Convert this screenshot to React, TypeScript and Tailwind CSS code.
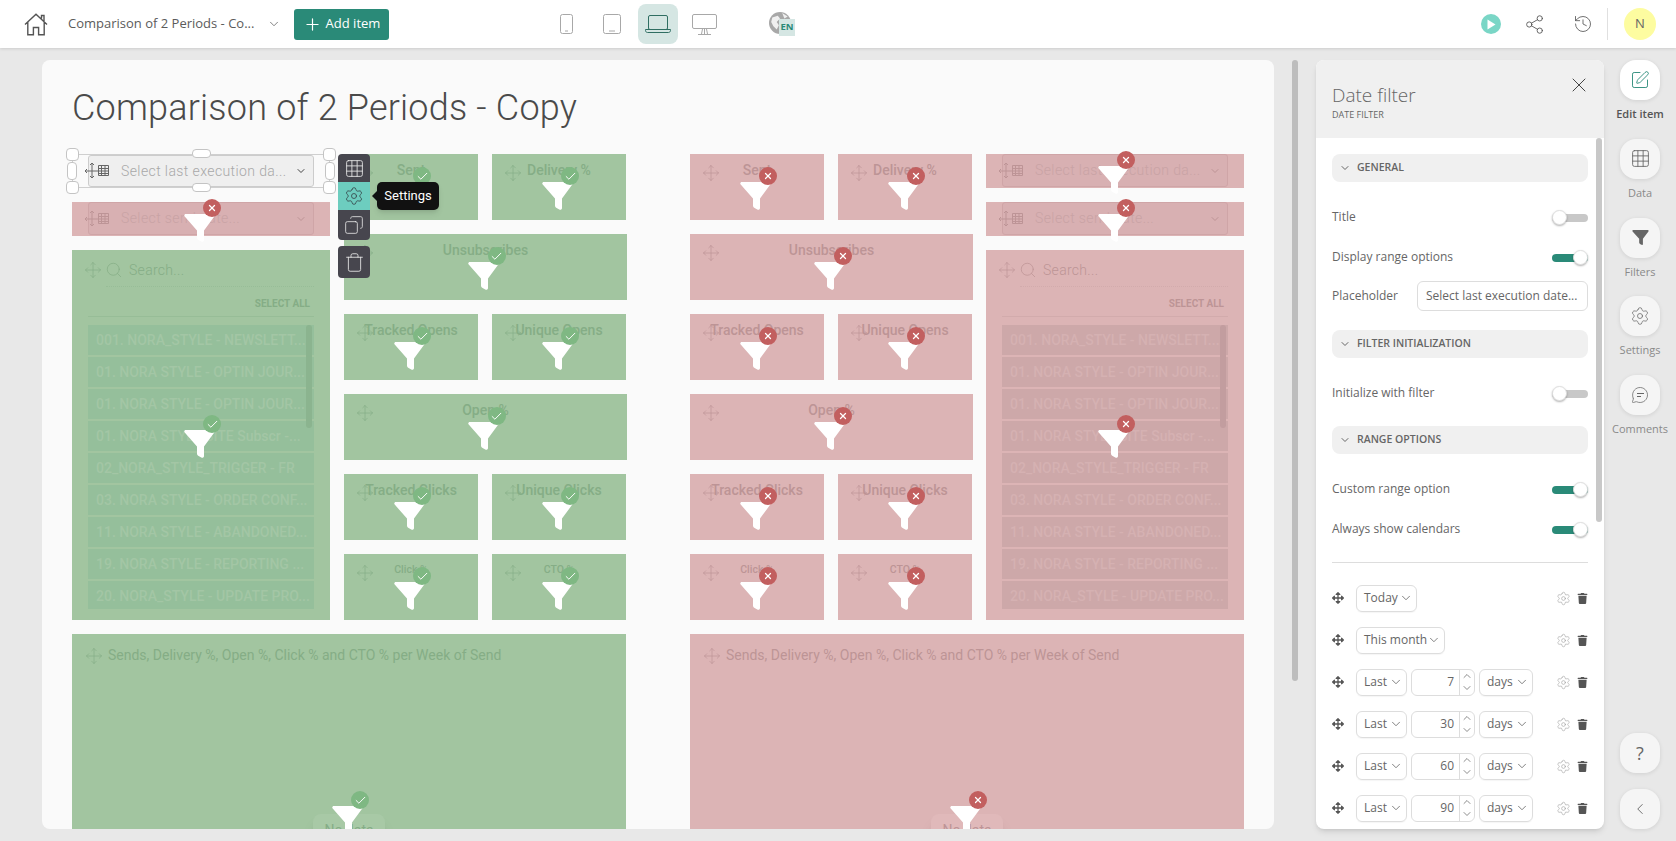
import React from 'react';
import {
    ChevronDown,
    ChevronLeft,
    ChevronUp,
    Check,
    Copy,
    Grid3x3,
    History,
    MessageCircle,
    Move,
    Plus,
    Search,
    Settings,
    Share2,
    SquarePen,
    Trash,
    X,
} from 'lucide-react';
import { FaArrowsAlt, FaTrash } from 'react-icons/fa';

type Tone = 'green' | 'red';

const tones = {
    green: {
        tile: 'bg-[#a2c5a0]',
        text: 'text-[#85ad86]',
        icon: 'text-[#85ad86]',
        badge: 'bg-[#7fb883]',
        row: 'bg-[#95bf9b]',
        rowText: 'text-[#a3c6a5]',
        thumb: 'bg-[#8bb48f]',
        line: 'border-[#97bd97]',
        selectBorder: 'border-[#97bd97]',
        selectText: 'text-[#9cbf9c]',
        select: 'bg-[#9ec19c]',
        chip: 'bg-[#a8c9a6]',
    },
    red: {
        tile: 'bg-[#dcb4b5]',
        text: 'text-[#bd9496]',
        icon: 'text-[#bd9496]',
        badge: 'bg-[#c25f5f]',
        row: 'bg-[#cda8a9]',
        rowText: 'text-[#d5b1b2]',
        thumb: 'bg-[#c29d9f]',
        line: 'border-[#d2abac]',
        selectBorder: 'border-[#cfa5a7]',
        selectText: 'text-[#c9a3a5]',
        select: 'bg-[#d8b0b2]',
        chip: 'bg-[#e0b9ba]',
    },
};

const listItems = [
    '001. NORA_STYLE - NEWSLETT...',
    '01. NORA STYLE - OPTIN JOUR...',
    '01. NORA STYLE - OPTIN JOUR...',
    '01. NORA STYLE SITE Subscr -...',
    '02_NORA_STYLE_TRIGGER - FR',
    '03. NORA STYLE - ORDER CONF...',
    '11. NORA STYLE - ABANDONED...',
    '19. NORA STYLE - REPORTING ...',
    '20. NORA_STYLE - UPDATE PRO...',
];

const FunnelShape = ({ className }: { className: string }) => (
    <svg viewBox="0 0 31 28" className={className} fill="currentColor">
        <path d="M2 0H29C30.5 0 31.2 1.4 30.3 2.6L20 16.5V26C20 27.5 18.6 28.3 17.3 27.6L14.6 26C13.6 25.4 13 24.5 13 23.4V16.5L.7 2.6C-.3 1.4.5 0 2 0Z" />
    </svg>
);

const FilterMark = ({ tone }: { tone: Tone }) => (
    <>
        <FunnelShape className="absolute top-1/2 left-1/2 z-10 -mt-[5px] -ml-[17.5px] h-[28px] w-[31px] text-white" />
        <span
            className={`absolute top-1/2 left-1/2 z-10 -mt-[20px] ml-[2px] flex h-[18px] w-[18px] items-center justify-center rounded-full text-white ${tones[tone].badge}`}
        >
            {tone === 'green' ? (
                <Check size={13} strokeWidth={1.75} />
            ) : (
                <X size={10} strokeWidth={3} />
            )}
        </span>
    </>
);

const Tile = ({
    tone,
    label,
    wide,
    small,
}: {
    tone: Tone;
    label: string;
    wide?: boolean;
    small?: boolean;
}) => (
    <div
        className={`relative h-[66px] ${wide ? 'w-[283px]' : 'w-[134px]'} ${tones[tone].tile}`}
    >
        <Move
            size={18}
            strokeWidth={0.9}
            className={`absolute top-[10px] left-[12px] ${tones[tone].icon}`}
        />
        <p
            className={`pt-[6px] text-center leading-5 font-medium ${small ? 'text-[10.5px]' : 'text-[14px]'} ${tones[tone].text}`}
        >
            {label}
        </p>
        <FilterMark tone={tone} />
    </div>
);

const TileColumn = ({ tone }: { tone: Tone }) => (
    <div className="flex w-[282px] shrink-0 flex-col items-start gap-[14px]">
        <div className="flex gap-[14px]">
            <Tile tone={tone} label="Sent" />
            <Tile tone={tone} label="Delivery %" />
        </div>
        <Tile tone={tone} label="Unsubscribes" wide />
        <div className="flex gap-[14px]">
            <Tile tone={tone} label="Tracked Opens" />
            <Tile tone={tone} label="Unique Opens" />
        </div>
        <Tile tone={tone} label="Open %" wide />
        <div className="flex gap-[14px]">
            <Tile tone={tone} label="Tracked Clicks" />
            <Tile tone={tone} label="Unique Clicks" />
        </div>
        <div className="flex gap-[14px]">
            <Tile tone={tone} label="Click %" small />
            <Tile tone={tone} label="CTO %" small />
        </div>
    </div>
);

const CalendarGlyph = ({ className }: { className: string }) => (
    <svg
        viewBox="0 0 24 16"
        className={`h-[16px] w-[24px] shrink-0 ${className}`}
        fill="none"
        stroke="currentColor"
        strokeWidth="1"
    >
        <path d="M7 0V15M0 8H14M5 2L7 0L9 2M5 13L7 15L9 13M2 6L0 8L2 10" />
        <path d="M13.5 2.5H23.5V12.5H13.5ZM13.5 5.5H23.5M13.5 8H23.5M13.5 10.5H23.5M16.5 2.5V12.5M20 2.5V12.5" />
    </svg>
);

const SelectFilter = ({
    tone,
    placeholder,
}: {
    tone: Tone;
    placeholder: string;
}) => (
    <div className={`relative h-[34px] w-[258px] ${tones[tone].tile}`}>
        <div
            className={`ml-[16px] flex h-[33px] w-[226px] items-center rounded-[3px] border ${tones[tone].selectBorder} ${tones[tone].select}`}
        >
            <CalendarGlyph className={`-ml-[4px] ${tones[tone].icon}`} />
            <span
                className={`ml-[12px] flex-1 text-[14px] font-light tracking-[0.4px] ${tones[tone].selectText}`}
            >
                {placeholder}
            </span>
            <ChevronDown
                size={12}
                className={`mr-[6px] ${tones[tone].icon}`}
            />
        </div>
        <FilterMark tone={tone} />
    </div>
);

const handleClass = 'absolute rounded-[4px] border border-[#c4c4c4] bg-white';

const SelectedFilter = () => (
    <div className="relative h-[34px] w-[258px] border border-[#cfcfcf]">
        <div className="ml-[15px] flex h-[32px] w-[226px] items-center rounded-[3px] border border-[#cccccc] bg-[#efefef]">
            <CalendarGlyph className="-ml-[4px] text-[#666666]" />
            <span className="ml-[12px] flex-1 text-[14px] font-light tracking-[0.4px] text-[#a8a8a8]">
                Select last execution da...
            </span>
            <ChevronDown size={12} className="mr-[6px] text-[#444444]" />
        </div>
        <span className={`${handleClass} -top-[7px] -left-[7px] h-[13px] w-[13px]`} />
        <span className={`${handleClass} -top-[7px] -right-[7px] h-[13px] w-[13px]`} />
        <span className={`${handleClass} -bottom-[7px] -left-[7px] h-[13px] w-[13px]`} />
        <span className={`${handleClass} -right-[7px] -bottom-[7px] h-[13px] w-[13px]`} />
        <span className={`${handleClass} top-[7px] -left-[6px] h-[18px] w-[10px]`} />
        <span className={`${handleClass} top-[7px] -right-[6px] h-[18px] w-[10px]`} />
        <span className={`${handleClass} -top-[6px] left-[119px] h-[9px] w-[19px]`} />
        <span className={`${handleClass} -bottom-[5px] left-[119px] h-[9px] w-[19px]`} />
    </div>
);

const ListFilter = ({ tone }: { tone: Tone }) => (
    <div
        className={`relative flex h-[370px] w-[258px] flex-col ${tones[tone].tile}`}
    >
        <div className="flex h-[36px] items-center pt-[4px] pl-[12px]">
            <Move size={18} strokeWidth={0.9} className={tones[tone].icon} />
            <Search
                size={18}
                strokeWidth={1}
                className={`ml-[3px] ${tones[tone].icon}`}
            />
            <span
                className={`ml-[6px] text-[14px] font-light tracking-[0.3px] ${tones[tone].text}`}
            >
                Search...
            </span>
        </div>
        <div
            className={`mr-[16px] ml-[34px] border-t border-dotted ${tones[tone].line}`}
        />
        <p
            className={`mt-[9px] mr-[20px] text-right text-[10px] leading-4 font-bold ${tones[tone].text}`}
        >
            SELECT ALL
        </p>
        <div className={`mx-[16px] mt-[4px] border-t ${tones[tone].line}`} />
        <div className="relative mx-[16px] mt-[8px] flex h-[284px] flex-col gap-[2px] overflow-hidden">
            {listItems.map((item, i) => (
                <div
                    key={i}
                    className={`flex h-[30px] shrink-0 items-center pl-[8px] ${tones[tone].row}`}
                >
                    <span
                        className={`text-[14px] font-medium whitespace-nowrap ${tones[tone].rowText}`}
                    >
                        {item}
                    </span>
                </div>
            ))}
            <div
                className={`absolute top-0 right-[2px] h-[103px] w-[6px] rounded-full ${tones[tone].thumb}`}
            />
        </div>
        <FilterMark tone={tone} />
    </div>
);

const ChartTile = ({ tone }: { tone: Tone }) => (
    <div className={`relative h-[354px] w-[554px] ${tones[tone].tile}`}>
        <div className="flex items-center pt-[11px] pl-[13px]">
            <Move size={18} strokeWidth={0.9} className={tones[tone].icon} />
            <span className={`ml-[5px] text-[14px] ${tones[tone].text}`}>
                Sends, Delivery %, Open %, Click % and CTO % per Week of Send
            </span>
        </div>
        <div
            className={`absolute top-[180px] left-[241px] flex h-[32px] w-[72px] items-center justify-center rounded-lg text-[14px] shadow-lg ${tones[tone].chip} ${tones[tone].text}`}
        >
            No data
        </div>
        <FilterMark tone={tone} />
    </div>
);

const EditToolbar = () => (
    <div className="absolute top-0 left-[266px] z-20 flex w-[32px] flex-col gap-[6px] text-[#e6e6e6]">
        <div className="flex flex-col overflow-hidden rounded-[4px] bg-[#47464e]">
            <span className="flex h-[28px] items-center justify-center">
                <Grid3x3 size={21} strokeWidth={1} />
            </span>
            <span className="flex h-[28px] items-center justify-center bg-[#6dcdbf] text-[#37474a]">
                <Settings size={20} strokeWidth={1} />
            </span>
            <span className="flex h-[30px] items-center justify-center">
                <Copy size={20} strokeWidth={1} className="-scale-x-100" />
            </span>
        </div>
        <span className="flex h-[32px] items-center justify-center rounded-[4px] bg-[#47464e]">
            <Trash size={21} strokeWidth={1} />
        </span>
        <div className="absolute top-[28px] left-[39px] flex h-[28px] w-[62px] items-center justify-center rounded-[5px] bg-[#111111] text-[13px] text-white shadow-md">
            <span className="absolute top-[9px] -left-[5px] h-0 w-0 border-y-[5px] border-r-[5px] border-y-transparent border-r-[#111111]" />
            Settings
        </div>
    </div>
);

const Canvas = () => (
    <div className="h-[769px] w-[1232px] shrink-0 overflow-hidden rounded-lg bg-[#fafafa] px-[30px] font-[Roboto,sans-serif]">
        <h1 className="h-[94px] pt-[26px] text-[36px] leading-[44px] font-light tracking-[0.2px] text-[#4a4a4a]">
            Comparison of 2 Periods - Copy
        </h1>
        <div className="flex gap-[64px]">
            <div className="relative flex w-[554px] flex-wrap gap-[14px]">
                <div className="flex w-[258px] flex-col gap-[14px]">
                    <SelectedFilter />
                    <SelectFilter tone="red" placeholder="Select send date..." />
                    <ListFilter tone="green" />
                </div>
                <TileColumn tone="green" />
                <EditToolbar />
                <ChartTile tone="green" />
            </div>
            <div className="flex w-[554px] flex-wrap gap-[14px]">
                <TileColumn tone="red" />
                <div className="flex w-[258px] flex-col gap-[14px]">
                    <SelectFilter
                        tone="red"
                        placeholder="Select last execution da..."
                    />
                    <SelectFilter tone="red" placeholder="Select send date..." />
                    <ListFilter tone="red" />
                </div>
                <ChartTile tone="red" />
            </div>
        </div>
    </div>
);

const Toggle = ({ on }: { on?: boolean }) => (
    <span className="relative block h-[15px] w-[36px]">
        <span
            className={`absolute top-[4px] left-0 h-[8px] w-[36px] rounded-full ${on ? 'bg-[#2a8a78]' : 'bg-[#c8c8c8]'}`}
        />
        <span
            className={`absolute top-0 h-[15px] w-[15px] rounded-full border border-[#e0e0e0] bg-white shadow-[0_1px_2px_rgba(0,0,0,0.3)] ${on ? 'right-0' : 'left-0'}`}
        />
    </span>
);

const SectionHeader = ({ label }: { label: string }) => (
    <div className="mb-[15px] flex h-[28px] items-center rounded-lg bg-[#f0f0f0] pl-[7px] text-[#666666]">
        <ChevronDown size={12} strokeWidth={2} />
        <span className="ml-[6px] text-[10.5px] font-semibold">{label}</span>
    </div>
);

const ToggleRow = ({ label, on }: { label: string; on?: boolean }) => (
    <div className="flex h-[40px] items-center justify-between">
        <span className="text-[12px] text-[#666666]">{label}</span>
        <Toggle on={on} />
    </div>
);

const MiniSelect = ({ label, width }: { label: string; width: string }) => (
    <span
        className={`flex h-[27px] items-center justify-between rounded-[6px] border border-[#dddddd] pr-[3px] pl-[7px] text-[12px] whitespace-nowrap text-[#666666] shadow-[0_1px_1px_rgba(0,0,0,0.04)] ${width}`}
    >
        {label}
        <ChevronDown size={14} strokeWidth={1.4} />
    </span>
);

const NumberField = ({ value }: { value: number }) => (
    <span className="flex h-[27px] w-[64px] rounded-[6px] border border-[#dddddd] text-[12px] text-[#666666]">
        <span className="flex flex-1 items-center justify-end pr-[5px]">
            {value}
        </span>
        <span className="flex w-[15px] flex-col items-center justify-center border-l border-[#dddddd]">
            <ChevronUp size={12} strokeWidth={1.5} />
            <ChevronDown size={12} strokeWidth={1.5} />
        </span>
    </span>
);

const RangeRow = ({ children }: { children: React.ReactNode }) => (
    <div className="flex h-[42px] items-center">
        <FaArrowsAlt size={12} className="shrink-0 text-[#555555]" />
        <div className="ml-[12px] flex flex-1 items-center gap-[4px]">
            {children}
        </div>
        <Settings size={15} strokeWidth={0.9} className="text-[#9a9a9a]" />
        <FaTrash size={11} className="ml-[6px] text-[#555555]" />
    </div>
);

const DatePanel = () => (
    <div className="relative ml-[18px] flex w-[288px] shrink-0 flex-col overflow-hidden rounded-lg bg-white shadow-md">
        <div className="relative h-[78px] shrink-0 bg-[#f0f0f0] pl-[16px]">
            <p className="pt-[21px] text-[19px] leading-7 font-light text-[#666666]">
                Date filter
            </p>
            <p className="text-[9px] leading-3 text-[#666666]">DATE FILTER</p>
            <X
                size={24}
                strokeWidth={1}
                className="absolute top-[13px] right-[13px] text-[#444444]"
            />
        </div>
        <div className="relative flex-1 overflow-hidden px-[16px] pt-[16px]">
            <SectionHeader label="GENERAL" />
            <ToggleRow label="Title" />
            <ToggleRow label="Display range options" on />
            <div className="mb-[15px] flex h-[38px] items-center justify-between">
                <span className="text-[12px] text-[#666666]">Placeholder</span>
                <span className="flex h-[30px] w-[171px] items-center rounded-[6px] border border-[#dddddd] pl-[8px] text-[12px] whitespace-nowrap text-[#666666]">
                    Select last execution date...
                </span>
            </div>
            <SectionHeader label="FILTER INITIALIZATION" />
            <ToggleRow label="Initialize with filter" />
            <div className="h-[13px]" />
            <SectionHeader label="RANGE OPTIONS" />
            <ToggleRow label="Custom range option" on />
            <ToggleRow label="Always show calendars" on />
            <div className="mt-[13px] mb-[14px] border-t border-[#dddddd]" />
            <RangeRow>
                <MiniSelect label="Today" width="w-[61px]" />
            </RangeRow>
            <RangeRow>
                <MiniSelect label="This month" width="w-[89px]" />
            </RangeRow>
            {[7, 30, 60, 90].map((value) => (
                <RangeRow key={value}>
                    <MiniSelect label="Last" width="w-[51px]" />
                    <NumberField value={value} />
                    <MiniSelect label="days" width="w-[54px]" />
                </RangeRow>
            ))}
            <div className="absolute top-0 right-[2px] h-[384px] w-[6px] rounded-full bg-[#c8c8c8]" />
        </div>
    </div>
);

const RailItem = ({
    label,
    active,
    children,
}: {
    label: string;
    active?: boolean;
    children: React.ReactNode;
}) => (
    <div className="flex h-[78.75px] flex-col items-center">
        <span
            className={`flex h-[40px] w-[40px] items-center justify-center rounded-2xl shadow-[0_1px_4px_rgba(0,0,0,0.1)] ${active ? 'bg-white text-[#2a8a78]' : 'bg-[#f5f5f5] text-[#666666]'}`}
        >
            {children}
        </span>
        <span
            className={`mt-[6px] text-[11px] leading-4 ${active ? 'font-semibold text-[#555555]' : 'text-[#8a8a8a]'}`}
        >
            {label}
        </span>
    </div>
);

const Rail = () => (
    <div className="ml-[8px] flex w-[56px] shrink-0 flex-col">
        <RailItem label="Edit item" active>
            <SquarePen size={20} strokeWidth={1.1} />
        </RailItem>
        <RailItem label="Data">
            <Grid3x3 size={21} strokeWidth={1} />
        </RailItem>
        <RailItem label="Filters">
            <FunnelShape className="h-[15px] w-[17px]" />
        </RailItem>
        <RailItem label="Settings">
            <Settings size={20} strokeWidth={0.9} />
        </RailItem>
        <RailItem label="Comments">
            <span className="relative flex">
                <MessageCircle size={18} strokeWidth={1} />
                <span className="absolute top-[7px] left-[6px] h-px w-[7px] bg-[#666666]" />
                <span className="absolute top-[10px] left-[6px] h-px w-[4px] bg-[#666666]" />
            </span>
        </RailItem>
        <div className="mt-auto flex flex-col items-center gap-[16px]">
            <span className="flex h-[40px] w-[40px] items-center justify-center rounded-2xl bg-[#f5f5f5] text-[18px] text-[#666666] shadow-[0_1px_4px_rgba(0,0,0,0.1)]">
                ?
            </span>
            <span className="flex h-[40px] w-[40px] items-center justify-center rounded-2xl bg-[#f5f5f5] text-[#666666] shadow-[0_1px_4px_rgba(0,0,0,0.1)]">
                <ChevronLeft size={18} strokeWidth={1.25} />
            </span>
        </div>
    </div>
);

const DeviceIcons = () => (
    <div className="ml-[157px] flex gap-[6px] text-[#a8a8a8]">
        <span className="flex h-[40px] w-[40px] items-center justify-center">
            <svg width="13" height="20" viewBox="0 0 13 20" fill="none" stroke="currentColor">
                <rect x="0.5" y="0.5" width="12" height="19" rx="2" />
                <path d="M5 17H8" />
            </svg>
        </span>
        <span className="flex h-[40px] w-[40px] items-center justify-center">
            <svg width="18" height="20" viewBox="0 0 18 20" fill="none" stroke="currentColor">
                <rect x="0.5" y="0.5" width="17" height="19" rx="2" />
                <path d="M6 17H12" />
            </svg>
        </span>
        <span className="flex h-[40px] w-[40px] items-center justify-center rounded-lg bg-[#d5e6e3] text-[#2f6e62]">
            <svg width="26" height="20" viewBox="0 0 26 20" fill="none" stroke="currentColor">
                <rect x="3.5" y="1.5" width="19" height="14" rx="1.5" />
                <path d="M.5 15.5H25.5V16.5C25.5 17.6 24.6 18.5 23.5 18.5H2.5C1.4 18.5.5 17.6.5 16.5Z" />
            </svg>
        </span>
        <span className="flex h-[40px] w-[40px] items-center justify-center">
            <svg width="25" height="21" viewBox="0 0 25 21" fill="none" stroke="currentColor">
                <rect x="0.5" y="0.5" width="24" height="14" rx="1.5" />
                <path d="M12.5 14.5V20M10.5 15L9.5 20M14.5 15L15.5 20M6 20.5H19" />
            </svg>
        </span>
    </div>
);

const Header = () => (
    <header className="relative z-10 flex h-[48px] shrink-0 items-center bg-white shadow-[0_1px_3px_rgba(0,0,0,0.12)]">
        <svg
            width="24"
            height="23"
            viewBox="0 0 24 23"
            fill="none"
            stroke="#555555"
            strokeWidth="1.4"
            className="ml-[24px] shrink-0"
        >
            <path d="M1 11.5L12 1.2L23 11.5M3.8 9V21.8H9.4V14.5H14.6V21.8H20.2V9M17.5 5.5V2.5H20V8" />
        </svg>
        <span className="ml-[20px] w-[192px] text-[13px] whitespace-nowrap text-[#5b5b5b]">
            Comparison of 2 Periods - Co...
        </span>
        <ChevronDown size={14} strokeWidth={1.4} className="ml-[7px] text-[#666666]" />
        <button className="ml-[13px] flex h-[31px] w-[95px] items-center justify-center gap-[4px] rounded-[3px] bg-[#2a8a78] text-[13px] font-medium text-white">
            <Plus size={19} strokeWidth={1.5} />
            Add item
        </button>
        <DeviceIcons />
        <span className="relative ml-[45px] block h-[24px] w-[26px]">
            <svg width="22" height="22" viewBox="0 0 20 20" className="absolute top-0 left-0">
                <circle cx="10" cy="10" r="10" fill="#a8a8a8" />
                <path d="M3 5L8 3.5L10 6L7 9L9 12L7 16L4 13L2 9Z" fill="#f0f0f0" />
                <path d="M12 1L17 4L14 6Z" fill="#f0f0f0" />
            </svg>
            <span className="absolute top-[7px] left-[10px] flex h-[17px] w-[16px] items-center justify-center bg-[#d5e6e3] text-[9.5px] font-bold text-[#2a8a78]">
                EN
            </span>
        </span>
        <div className="ml-auto flex items-center">
            <span className="flex h-[20px] w-[20px] items-center justify-center rounded-full bg-[#7ad6c6]">
                <svg width="9" height="11" viewBox="0 0 9 11" fill="white" className="ml-[1px]">
                    <path d="M.5.5L8.5 5.5L.5 10.5Z" />
                </svg>
            </span>
            <Share2 size={21} strokeWidth={1} className="ml-[23px] text-[#555555]" />
            <History size={20} strokeWidth={1} className="ml-[28px] text-[#555555]" />
            <span className="ml-[14px] h-[32px] border-l border-[#e0e0e0]" />
            <span className="mr-[20px] ml-[16px] flex h-[32px] w-[32px] items-center justify-center rounded-full bg-[#fdfca0] text-[13px] text-[#666666]">
                N
            </span>
        </div>
    </header>
);

export default function App(): React.JSX.Element {
    return (
        <div className="flex h-[841px] w-[1676px] flex-col overflow-hidden bg-[#e8e8e8] font-['Open_Sans',sans-serif]">
            <Header />
            <main className="flex h-[793px] py-[12px] pl-[42px]">
                <Canvas />
                <div className="ml-[18px] h-[621px] w-[6px] shrink-0 rounded-full bg-[#bdbdbd]" />
                <DatePanel />
                <Rail />
            </main>
        </div>
    );
}
